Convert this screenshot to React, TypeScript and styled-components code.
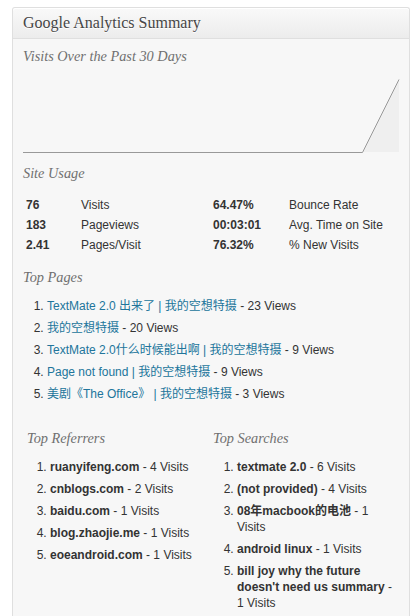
import React from "react";
import styled, { createGlobalStyle } from "styled-components";

const Global = createGlobalStyle`
  html, body { margin: 0; padding: 0; background: #ffffff; }
  body { font-family: "Liberation Sans", Arial, "Noto Sans CJK SC", sans-serif; font-size: 12px; color: #333; }
`;

const SERIF = `"Liberation Serif", Georgia, serif`;

const Panel = styled.div`
  margin: 7px 8px 0 12px;
  border: 1px solid #dfdfdf;
  border-bottom: none;
  border-radius: 3px 3px 0 0;
  background: #f7f7f7;
  min-height: calc(100vh - 8px);
`;

const Header = styled.h3`
  margin: 0;
  height: 30px;
  display: flex;
  align-items: center;
  padding: 0 10px;
  border-bottom: 1px solid #dfdfdf;
  border-radius: 3px 3px 0 0;
  background: linear-gradient(#f9f9f9, #ececec);
  box-shadow: inset 0 1px 0 #fff;
  font-family: ${SERIF};
  font-weight: normal;
  font-size: 16px;
  color: #464646;
  text-shadow: 0 1px 0 #fff;
`;

const Body = styled.div`
  padding: 7px 9px 0 10px;
`;

const SectionTitle = styled.h4<{ $mt?: number }>`
  margin: ${(p) => p.$mt ?? 0}px 0 0;
  font-family: ${SERIF};
  font-style: italic;
  font-weight: normal;
  font-size: 14.3px;
  line-height: 20px;
  color: #707070;
`;

const Chart = styled.svg`
  display: block;
  margin-top: 13px;
  width: 377px;
  height: 74px;
`;

const StatsGrid = styled.div`
  margin-top: 12px;
  padding-left: 3px;
  display: grid;
  grid-template-columns: 55px 132px 76px 1fr;
  grid-auto-rows: 20px;
  align-items: center;
`;

const Num = styled.span`
  font-weight: bold;
`;

const List = styled.ol<{ $pl: number }>`
  margin: 11px 0 0;
  padding: 0 0 0 ${(p) => p.$pl}px;
  line-height: 16px;
  li { margin-bottom: 6px; }
  li:last-child { margin-bottom: 0; }
`;

const Link = styled.a`
  color: #21759b;
  text-decoration: none;
`;

const Columns = styled.div`
  margin-top: 26px;
  display: grid;
  grid-template-columns: 190px 1fr;
`;

const Col = styled.div<{ $pl: number }>`
  padding-left: ${(p) => p.$pl}px;
  min-width: 0;
`;

const pages = [
  ["TextMate 2.0 出来了 | 我的空想特摄", "23"],
  ["我的空想特摄", "20"],
  ["TextMate 2.0什么时候能出啊 | 我的空想特摄", "9"],
  ["Page not found | 我的空想特摄", "9"],
  ["美剧《The Office》 | 我的空想特摄", "3"],
];

const referrers = [
  ["ruanyifeng.com", "4"],
  ["cnblogs.com", "2"],
  ["baidu.com", "1"],
  ["blog.zhaojie.me", "1"],
  ["eoeandroid.com", "1"],
];

const searches = [
  ["textmate 2.0", "6"],
  ["(not provided)", "4"],
  ["08年macbook的电池", "1"],
  ["android linux", "1"],
  ["bill joy why the future doesn't need us summary", "1"],
];

export default function App() {
  return (
    <>
      <Global />
      <Panel>
        <Header>Google Analytics Summary</Header>
        <Body>
          <SectionTitle>Visits Over the Past 30 Days</SectionTitle>
          <Chart viewBox="0 0 377 74">
            <polygon points="339.5,73 376,0 376,73" fill="#efefef" />
            <polyline points="0,73.5 339.5,73.5 376,0.5" fill="none" stroke="#999999" strokeWidth="1" />
          </Chart>
          <SectionTitle $mt={10}>Site Usage</SectionTitle>
          <StatsGrid>
            <Num>76</Num><span>Visits</span><Num>64.47%</Num><span>Bounce Rate</span>
            <Num>183</Num><span>Pageviews</span><Num>00:03:01</Num><span>Avg. Time on Site</span>
            <Num>2.41</Num><span>Pages/Visit</span><Num>76.32%</Num><span>% New Visits</span>
          </StatsGrid>
          <SectionTitle $mt={12}>Top Pages</SectionTitle>
          <List $pl={24}>
            {pages.map(([t, v]) => (
              <li key={t}>
                <Link href="#">{t}</Link> - {v} Views
              </li>
            ))}
          </List>
          <Columns>
            <Col $pl={4}>
              <SectionTitle>Top Referrers</SectionTitle>
              <List $pl={23}>
                {referrers.map(([t, v]) => (
                  <li key={t}>
                    <Num>{t}</Num> - {v} Visits
                  </li>
                ))}
              </List>
            </Col>
            <Col $pl={0}>
              <SectionTitle>Top Searches</SectionTitle>
              <List $pl={24}>
                {searches.map(([t, v]) => (
                  <li key={t}>
                    <Num>{t}</Num> - {v} Visits
                  </li>
                ))}
              </List>
            </Col>
          </Columns>
        </Body>
      </Panel>
    </>
  );
}
